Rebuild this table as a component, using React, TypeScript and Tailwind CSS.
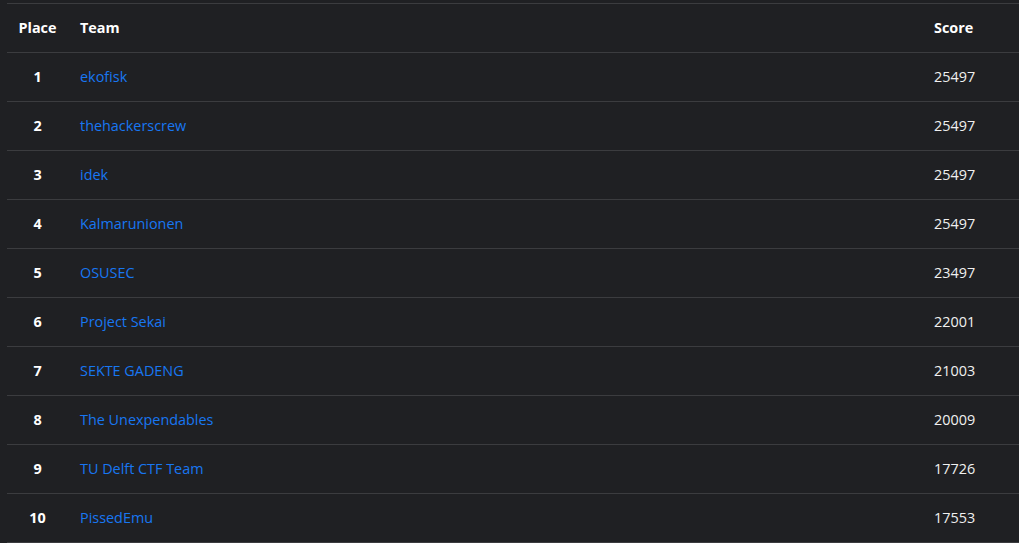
import React from "react";

const teams = [
  { place: 1, name: "ekofisk", score: 25497 },
  { place: 2, name: "thehackerscrew", score: 25497 },
  { place: 3, name: "idek", score: 25497 },
  { place: 4, name: "Kalmarunionen", score: 25497 },
  { place: 5, name: "OSUSEC", score: 23497 },
  { place: 6, name: "Project Sekai", score: 22001 },
  { place: 7, name: "SEKTE GADENG", score: 21003 },
  { place: 8, name: "The Unexpendables", score: 20009 },
  { place: 9, name: "TU Delft CTF Team", score: 17726 },
  { place: 10, name: "PissedEmu", score: 17553 },
];

const App = () => {
  return (
    <div
      className="w-full h-[543px] overflow-hidden bg-[#1f2023] pt-[3px] pl-[7px] text-[14.4px] leading-[20px]"
      style={{ fontFamily: '"Open Sans", "Liberation Sans", sans-serif' }}
    >
      <div className="w-[1012px] border-t border-[#3b3c3f]">
        {/* encabezado */}
        <div className="grid grid-cols-[61px_1fr_97px] h-[49px] items-center border-b border-[#3b3c3f] text-white font-bold">
          <div className="text-center">Place</div>
          <div className="px-3">Team</div>
          <div className="px-3">Score</div>
        </div>
        {teams.map((t) => (
          <div
            key={t.place}
            className="grid grid-cols-[61px_1fr_97px] h-[49px] items-center border-b border-[#3b3c3f]"
          >
            <div className="text-center text-white font-bold">{t.place}</div>
            <div className="px-3">
              <a href="#" className="text-[#1877f2]">
                {t.name}
              </a>
            </div>
            <div className="px-3 text-[#f0f0f0]">{t.score}</div>
          </div>
        ))}
      </div>
    </div>
  );
};

export default App;
